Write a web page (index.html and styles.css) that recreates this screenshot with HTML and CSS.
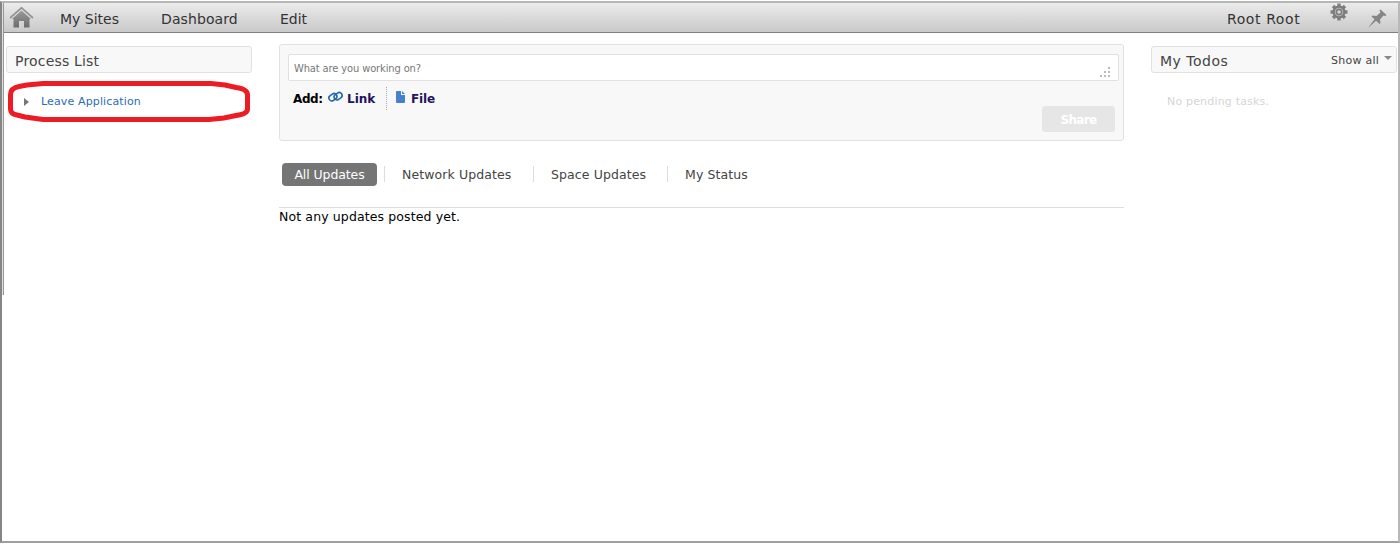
FILE: index.html
```html
<!DOCTYPE html>
<html lang="en">
<head>
<meta charset="utf-8">
<title>Dashboard</title>
<link rel="stylesheet" href="styles.css">
</head>
<body>
<div class="frame">
  <header class="toolbar">
    <svg class="home" width="25" height="22" viewBox="0 0 25 22"><defs><linearGradient id="g" x1="0" y1="0" x2="0" y2="1"><stop offset="0" stop-color="#999"/><stop offset="1" stop-color="#6d6d6d"/></linearGradient></defs><path fill="none" stroke="#959595" stroke-width="1.700" d="M1 11 12.500.8 24 11"/><path fill="url(#g)" d="M12.500 3.500 22 12h-1.500v8.500H15V14h-5v6.500H4.500V12H3z"/></svg>
    <nav class="nav"><span class="sites">My Sites</span><span class="dash">Dashboard</span><span class="edit">Edit</span></nav>
    <span class="user">Root Root</span>
    <svg class="gear" width="18" height="18" viewBox="0 0 18 18"><g stroke="#808080" stroke-width="3.400"><path d="M9 .5v17M.5 9h17M3 3l12 12M15 3 3 15"/></g><circle cx="9" cy="9" r="6.500" fill="#7b7b7b"/><circle cx="9" cy="9" r="3.900" fill="none" stroke="#b5b5b5" stroke-width="1"/><circle cx="9" cy="9" r="1.800" fill="#d8d8d8"/></svg>
    <svg class="pin" width="19" height="19" viewBox="0 0 19 19"><path fill="#858585" d="M12.500.5 18.500 6 17.500 7 15.500 6.500 12 10.500 12.500 14 11.500 15 8 11.800 0 19 6.500 10.300 3.500 7.500 4.500 6.500 8.500 7 12.500 3.500 11.500 1.500z"/></svg>
  </header>
  <main class="columns">
    <aside class="left">
      <h2 class="panel-title">Process List</h2>
      <div class="process"><i class="arrow"></i><a class="process-link">Leave Application</a>
        <svg class="ring" width="244" height="42" viewBox="0 0 244 42"><path d="M36 2.500H204L218 4 229 6.500Q240.500 8 240.500 14V28Q240.500 33 229 34.500L217 37 202 38.500H36L18 36 10 34Q3.500 33 3.500 28V14Q3.500 7 12 5.500L20 4Z" fill="none" stroke="#ed1c24" stroke-width="5"/></svg>
      </div>
    </aside>
    <section class="center">
      <div class="composer">
        <div class="field"><span class="placeholder">What are you working on?</span>
          <svg class="grip" width="10" height="10" viewBox="0 0 10 10"><path fill="#bbb" d="M8 0h2v2H8zM4 4h2v2H4zM8 4h2v2H8zM0 8h2v2H0zM4 8h2v2H4zM8 8h2v2H8z"/></svg></div>
        <div class="add"><b class="add-label">Add:</b>
          <svg class="chain" width="15" height="12" viewBox="0 0 15 12"><g fill="none" stroke="#1f66b0" stroke-width="1.600"><rect x="-4.200" y="-2.900" width="8.400" height="5.800" rx="2.900" transform="translate(4.900 6.200) rotate(-35)"/><rect x="-4.200" y="-2.900" width="8.400" height="5.800" rx="2.900" transform="translate(10.100 5.200) rotate(-35)"/></g></svg>
          <b class="link">Link</b><i class="dots"></i>
          <svg class="doc" width="10" height="12" viewBox="0 0 10 12"><path fill="#4483c9" d="M1 0h4v4h4v7q0 1-1 1H1q-1 0-1-1V1q0-1 1-1z"/><path fill="#4483c9" d="M6 0l3 3H6z"/></svg>
          <b class="file">File</b></div>
        <div class="share">Share</div>
      </div>
      <div class="tabs"><span class="tab active">All Updates</span><span class="tab network">Network Updates</span><span class="tab space">Space Updates</span><span class="tab status">My Status</span></div>
      <p class="empty">Not any updates posted yet.</p>
    </section>
    <aside class="right">
      <div class="panel-title todo"><span class="todo-name">My Todos</span><span class="show">Show all</span><i class="down"></i></div>
      <p class="none">No pending tasks.</p>
    </aside>
  </main>
</div>
</body>
</html>
```
FILE: styles.css
```css
* { box-sizing: border-box; }
body { margin: 0; width: 1400px; height: 544px; overflow: hidden; background: #fff; font-family: "DejaVu Sans", sans-serif; }
svg { display: block; flex: none; }
span, b, a { white-space: nowrap; }
.frame { position: relative; height: 542px; margin-top: 1px; border-top: 2px solid #b5b8b4; border-right: 2px solid #b9b9b9; border-left: 2px solid #858585; border-bottom: 2px solid #a0a0a0; }
.frame::before { content: ""; position: absolute; left: 0; top: 0; width: 2px; height: 292px; background: linear-gradient(90deg, #ddd 50%, #999 50%); }
.toolbar { display: flex; height: 30px; margin-left: 2px; background: linear-gradient(#ebebeb, #c9c9c9); border-bottom: 1px solid #818181; color: #333; font-size: 14px; line-height: 32px; }
.home { margin: 4px 0 0 5px; }
.nav { display: flex; }
.sites { width: 101px; margin-left: 26px; }
.dash { width: 119px; letter-spacing: .1px; }
.user { margin-left: auto; width: 103px; letter-spacing: .6px; }
.pin { margin: 6px 11px 0 20px; }
.columns { display: flex; align-items: flex-start; }
.left { width: 246px; margin: 13px 27px 0 4px; }
.panel-title { height: 27px; margin: 0; padding-left: 8px; border: 1px solid #e1e1e1; border-radius: 3px; background: #f8f8f8; color: #444; font-size: 14px; font-weight: 400; letter-spacing: .18px; line-height: 29px; }
.process { position: relative; display: flex; height: 56px; padding: 22px 0 0 18px; font-size: 11px; line-height: 14px; }
.arrow { width: 0; height: 0; margin: 3px 12px 0 0; border: 4px solid transparent; border-left: 5px solid #777; border-right: 0; }
.process-link { color: #2a6cb8; letter-spacing: .13px; }
.ring { position: absolute; left: 1px; top: 8px; }
.center { width: 845px; margin-top: 11px; }
.composer { height: 97px; padding: 9px 4px 0 8px; border: 1px solid #e1e1e1; border-radius: 3px; background: #f8f8f8; }
.field { display: flex; justify-content: space-between; height: 27px; padding: 0 8px 0 5px; border: 1px solid #e1e1e1; border-radius: 2px; background: #fff; color: #777; font: 11px/27px "DejaVu Sans Condensed", sans-serif; letter-spacing: -.11px; }
.grip { margin-top: 12px; }
.add { display: flex; height: 25px; padding: 6px 0 0 5px; color: #23125e; font-size: 12px; line-height: 24px; }
.add-label { width: 35px; color: #000; letter-spacing: -.4px; }
.chain { margin-top: 4px; }
.link { width: 39px; margin-left: 4px; }
.dots { height: 23px; border-left: 1px dotted #aaa; }
.doc { margin: 4px 6px 0 9px; }
.file { margin-left: -1px; letter-spacing: -.1px; }
.share { width: 73px; height: 26px; margin: 0 4px 0 auto; border-radius: 3px; background: #e6e6e6; color: #fff; font-size: 12px; font-weight: 700; letter-spacing: -.7px; line-height: 28px; text-align: center; }
.tabs { display: flex; height: 44px; margin-top: 22px; padding-left: 3px; color: #444; font-size: 12.5px; letter-spacing: .1px; line-height: 24px; }
.active { width: 95px; height: 23px; border-radius: 4px; background: #757575; color: #fff; letter-spacing: -.1px; text-align: center; }
.network, .space, .status { height: 16px; margin-top: 3px; border-left: 1px solid #ddd; padding-left: 17px; line-height: 18px; }
.network { width: 149px; margin-left: 7px; }
.space { width: 134px; }
.empty { margin: 0; border-top: 1px solid #ddd; color: #000; font-size: 12.5px; letter-spacing: .12px; line-height: 17px; }
.right { width: 246px; margin: 13px 0 0 27px; }
.todo { display: flex; }
.todo-name { letter-spacing: .5px; }
.show { margin-left: auto; font-size: 11px; letter-spacing: .25px; line-height: 27px; }
.down { width: 0; height: 0; margin: 9px 4px 0 5px; border: 4px solid transparent; border-top-color: #888; border-bottom: 0; }
.none { margin: 22px 0 0 16px; color: #d5d5d5; font-size: 11px; letter-spacing: .18px; line-height: 14px; }
```
